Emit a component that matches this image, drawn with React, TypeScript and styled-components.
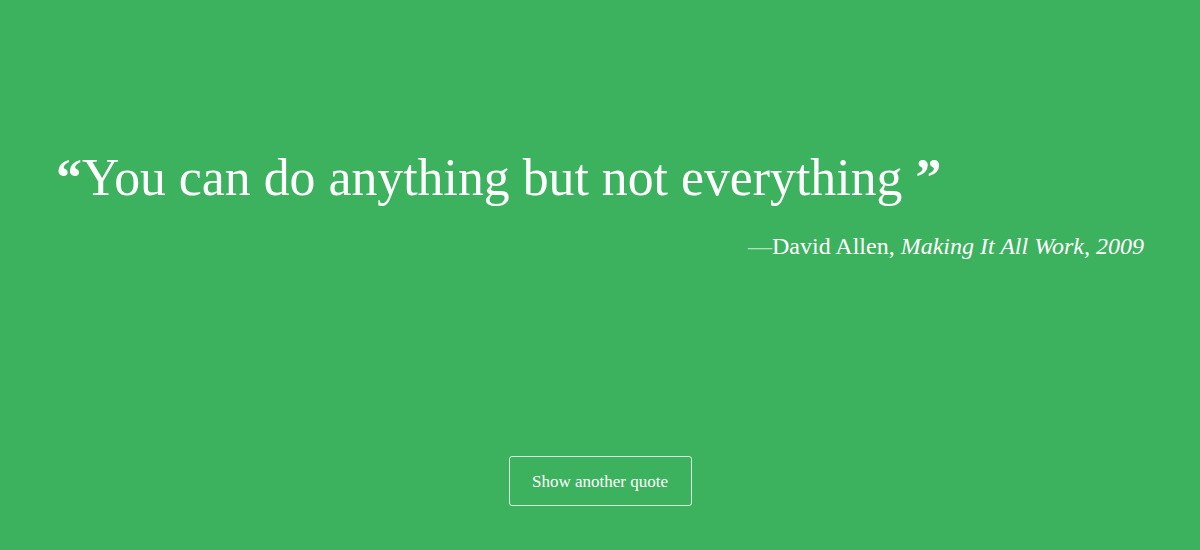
import React from "react";
import styled, { createGlobalStyle } from "styled-components";

const Global = createGlobalStyle`
  html, body { margin: 0; padding: 0; }
  body {
    background: #3cb25e;
    font-family: "Liberation Serif", "Times New Roman", serif;
    color: #fff;
  }
`;

const Page = styled.div`
  height: 550px;
  box-sizing: border-box;
  display: flex;
  flex-direction: column;
  padding: 142px 56px 0 56px;
`;

const Quote = styled.blockquote`
  margin: 0;
  font-size: 51.8px;
  line-height: 72px;
  color: #fff;
`;

const Mark = styled.span`
  font-weight: bold;
`;

const Cite = styled.div`
  margin-top: 16px;
  text-align: right;
  font-size: 24px;
  line-height: 32px;
`;

const Dash = styled.span`
  opacity: 0.6;
`;

const Work = styled.em`
  font-style: italic;
`;

const Footer = styled.div`
  margin-top: auto;
  padding-bottom: 44px;
  display: flex;
  justify-content: center;
`;

const Button = styled.button`
  width: 183px;
  height: 50px;
  padding: 2px 0 0;
  background: transparent;
  border: 1px solid rgba(255, 255, 255, 0.8);
  border-radius: 3px;
  color: #fff;
  font-family: "Liberation Serif", "Times New Roman", serif;
  font-size: 17px;
  cursor: pointer;
`;

export default function App() {
  return (
    <>
      <Global />
      <Page>
        <Quote>
          <Mark>“</Mark>You can do anything but not everything <Mark>”</Mark>
        </Quote>
        <Cite>
          <Dash>—</Dash>David Allen, <Work>Making It All Work, 2009</Work>
        </Cite>
        <Footer>
          <Button>Show another quote</Button>
        </Footer>
      </Page>
    </>
  );
}
